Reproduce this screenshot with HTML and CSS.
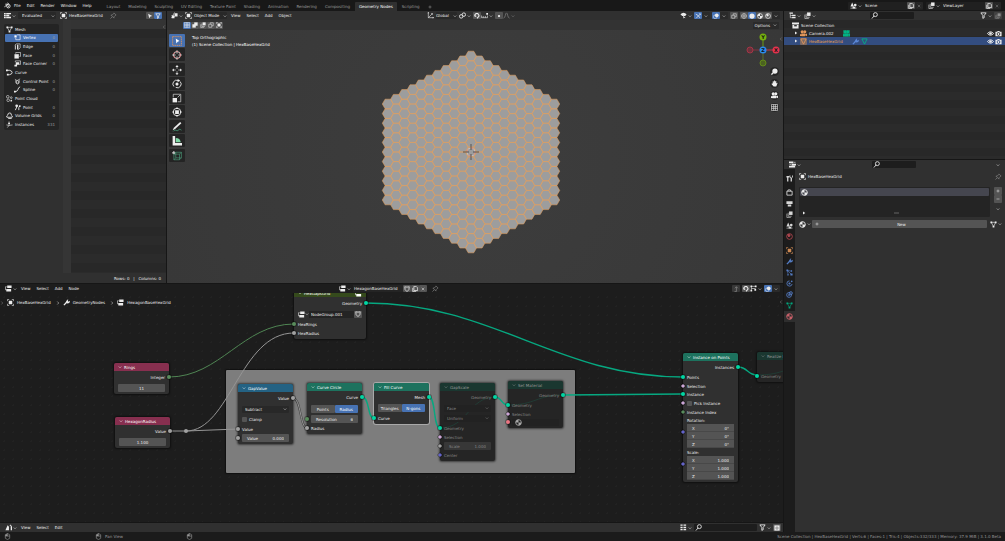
FILE: index.html
```html
<!DOCTYPE html>
<html lang="en">
<head>
<meta charset="utf-8">
<title>Blender</title>
<link rel="stylesheet" href="styles.css">
</head>
<body>
<svg class="sprite" aria-hidden="true">
  <symbol id="chev" viewBox="0 0 16 16"><path class="s" d="M3 6l5 5 5-5"/></symbol>
  <symbol id="left" viewBox="0 0 16 16"><path class="s" d="M11 2L5 8l6 6"/></symbol>
  <symbol id="right" viewBox="0 0 16 16"><path class="s" d="M5 2l6 6-6 6"/></symbol>
  <symbol id="play" viewBox="0 0 16 16"><path class="f" d="M4 2l9 6-9 6z"/></symbol>
  <symbol id="plus" viewBox="0 0 16 16"><path class="s" d="M8 2v12M2 8h12"/></symbol>
  <symbol id="minus" viewBox="0 0 16 16"><path class="s" d="M2 8h12"/></symbol>
  <symbol id="cross" viewBox="0 0 16 16"><path class="s" d="M3 3l10 10M13 3L3 13"/></symbol>
  <symbol id="blender" viewBox="0 0 16 16"><path class="s" d="M1 11l8-6H3M8 2l4 3.500"/><circle class="s" cx="10" cy="9.500" r="4"/><circle class="f" cx="10" cy="9.500" r="1.500"/></symbol>
  <symbol id="sheet" viewBox="0 0 16 16"><path class="f" d="M0 2h4v3H0zM5 2h11v3H5zM0 6.500h4v3H0zM5 6.500h7v3H5zM0 11h4v3H0zM5 11h11v3H5z"/></symbol>
  <symbol id="object" viewBox="0 0 16 16"><path class="f" d="M4 4h8v8H4z"/><path class="s thin" d="M1 5V1h4M11 1h4v4M15 11v4h-4M5 15H1v-4"/></symbol>
  <symbol id="pin" viewBox="0 0 16 16"><path class="s thin" d="M9 2l5 5-2 1-3 3v3L2 7h3l3-3zM5 11l-4 4"/></symbol>
  <symbol id="arrow" viewBox="0 0 16 16"><path class="f" d="M3 2l11 6-5 1.500L6 14z"/></symbol>
  <symbol id="funnel" viewBox="0 0 16 16"><path class="s" d="M2 2h12L9.500 8v5l-3 1.500V8z"/></symbol>
  <symbol id="mesh" viewBox="0 0 16 16"><path class="s thin" d="M3 3h10L8 13z"/><path class="f" d="M1 1h4v4H1zM11 1h4v4h-4zM6 11h4v4H6z"/></symbol>
  <symbol id="tri" viewBox="0 0 16 16"><path class="s" d="M2 2h12L8 14z"/></symbol>
  <symbol id="vertex" viewBox="0 0 16 16"><path class="s thin" d="M7 2h7v11H4V9"/><path class="f" d="M1 3h5v5H1z"/></symbol>
  <symbol id="edge" viewBox="0 0 16 16"><path class="s thin" d="M5 2h9v9l-4 4M2 5l3-3"/><path class="f" d="M7 4h3v11H7zM2 5h2v10H2z"/></symbol>
  <symbol id="face" viewBox="0 0 16 16"><path class="s thin" d="M4 4V1h11v9h-3"/><path class="f" d="M1 5h10v10H1z"/></symbol>
  <symbol id="corner" viewBox="0 0 16 16"><path class="s thin" d="M3 5V2h12v8h-3"/><path class="f" d="M4 5h8v6H4zM1 11h6v4H1z"/></symbol>
  <symbol id="curve" viewBox="0 0 16 16"><path class="s" d="M2 3h6q6 1 6 5t-6 5H5"/><path class="f" d="M0 1h4v4H0zM2 11h4v4H2z"/></symbol>
  <symbol id="cpoint" viewBox="0 0 16 16"><path class="s thin" d="M2 3l5 3 7-4M4 5q-1 9 4 9t4-9"/><circle class="s thin" cx="8" cy="9" r="3"/></symbol>
  <symbol id="spline" viewBox="0 0 16 16"><path class="s" d="M2 13q6 0 7-5t5-6"/><path class="f" d="M0 11h4v4H0z"/></symbol>
  <symbol id="cloud" viewBox="0 0 16 16"><circle class="s thin" cx="4" cy="4" r="3"/><circle class="s thin" cx="12" cy="6" r="2"/><circle class="s thin" cx="5" cy="12" r="3"/><circle class="f" cx="12" cy="13" r="2"/></symbol>
  <symbol id="point" viewBox="0 0 16 16"><path class="s" d="M3 14L8 3M11 14V8l3-4"/><circle class="f" cx="6" cy="4" r="3"/><circle class="f" cx="13" cy="5" r="2"/></symbol>
  <symbol id="volume" viewBox="0 0 16 16"><path class="s" d="M2 12q-2-3 2-5 0-5 5-5 4 1 3 5 4 2 2 5zM5 15h8"/></symbol>
  <symbol id="inst" viewBox="0 0 16 16"><path class="s thin" d="M7 1v9M1 9l6 1 8-1M7 10l-4 5"/><path class="f" d="M5 4h4v3H5z"/></symbol>
  <symbol id="view3d" viewBox="0 0 16 16"><path class="f" d="M8 3h7v7H8zM2 9h6v5H2z"/><path class="s thin" d="M1 14L8 1M1 8h6"/></symbol>
  <symbol id="sel" viewBox="0 0 16 16"><path class="f" d="M6 1h9v9H6z"/><path class="f" d="M1 6h9v9H1z"/></symbol>
  <symbol id="cursor" viewBox="0 0 16 16"><circle class="s thin" cx="8" cy="8" r="5.500"/><circle class="s thin dash" cx="8" cy="8" r="5.500"/><path class="s hair" d="M8 0v6M8 10v6M0 8h6M10 8h6"/></symbol>
  <symbol id="box" viewBox="0 0 16 16"><path class="s thin dots" d="M1 1h14v14H1z"/><path fill="#fff" d="M6 4l6 4-3 1-2 3z"/></symbol>
  <symbol id="move" viewBox="0 0 16 16"><path class="s hair" d="M8 2v4M8 10v4M2 8h4M10 8h4"/><path class="f" d="M8 0l2.500 3h-5zM8 16l2.500-3h-5zM0 8l3-2.500v5zM16 8l-3-2.500v5z"/></symbol>
  <symbol id="rotate" viewBox="0 0 16 16"><path class="s thin" d="M3 12A6 6 0 0 1 10 2.500M13 4a6 6 0 0 1-7 9.500"/><path class="f" d="M8 5l3 3-3 3-3-3zM9 0l4 2.500L9 5z"/></symbol>
  <symbol id="scale" viewBox="0 0 16 16"><path class="s hair" d="M2 7V2h12v12H9M9 7l4-4"/><path class="f" d="M1 8h7v7H1z"/></symbol>
  <symbol id="transform" viewBox="0 0 16 16"><circle class="s thin" cx="8" cy="8" r="6"/><path class="f" d="M5 5h6v6H5zM8 0l2 3H6zM8 16l2-3H6zM0 8l3-2v4zM16 8l-3-2v4z"/></symbol>
  <symbol id="annotate" viewBox="0 0 16 16"><path class="f" d="M13 0l2 2L5 11l-4 2 2-4z"/><path class="s thin green" d="M2 15c4-5 5 1 8-2s4 0 5 0"/></symbol>
  <symbol id="measure" viewBox="0 0 16 16"><path class="f" d="M1 0h4v11h11v4H1z"/><path class="mint" d="M6 3q7 0 8 7H6z"/></symbol>
  <symbol id="cube" viewBox="0 0 16 16"><path class="s hair green" d="M3 5h9v9H3zM3 5l3-3h9v9l-3 3M12 5l3-3M6 2v9h9M6 11l-3 3"/><path class="s thin" d="M3 0v5M0 3h5"/></symbol>
  <symbol id="axes" viewBox="0 0 16 16"><path class="s thin" d="M3 1v12h12M3 13L12 4"/><path class="f" d="M1 3l2-3 2 3zM13 11l3 2-3 2zM9 3h4v4z"/></symbol>
  <symbol id="pivot" viewBox="0 0 16 16"><circle class="s" cx="5" cy="10" r="4"/><circle class="s" cx="11" cy="6" r="4"/></symbol>
  <symbol id="magnet" viewBox="0 0 16 16"><path class="s fat" d="M3 9a5 5 0 0 1 9-5q3 4-1 7l-3 3M3 9l3-1"/></symbol>
  <symbol id="inc" viewBox="0 0 16 16"><path class="s thin" d="M1 8v5h14V8M5 9v4M10 9v4"/><path class="f" d="M12 2h4v4h-4z"/></symbol>
  <symbol id="dot" viewBox="0 0 16 16"><circle class="f" cx="8" cy="8" r="3"/></symbol>
  <symbol id="fall" viewBox="0 0 16 16"><path class="s thin" d="M1 14C6 14 5 2 8 2s2 12 7 12"/></symbol>
  <symbol id="eye" viewBox="0 0 16 16"><path class="s" d="M1 8q7-8 14 0-7 8-14 0z"/><circle class="f" cx="8" cy="8" r="3"/></symbol>
  <symbol id="visib" viewBox="0 0 16 16"><path class="f" d="M1 5q7-7 14 0l-3 4H5zM7 8l1 7 2-2 3 1z"/></symbol>
  <symbol id="giz" viewBox="0 0 16 16"><path class="s" d="M2 3q7 2 11 10M3 14L14 3"/><path class="f" d="M10 1h5v5z"/></symbol>
  <symbol id="over" viewBox="0 0 16 16"><circle class="f" cx="10" cy="6" r="5"/><circle class="s thin" cx="6" cy="10" r="5"/></symbol>
  <symbol id="xray" viewBox="0 0 16 16"><path class="s thin" d="M2 6h8v8H2zM6 6V2h8v8h-4"/></symbol>
  <symbol id="globe" viewBox="0 0 16 16"><circle class="s thin" cx="8" cy="8" r="6.500"/><path class="s thin" d="M8 1v14M1 8h14"/></symbol>
  <symbol id="disc" viewBox="0 0 16 16"><circle class="f" cx="8" cy="8" r="7"/></symbol>
  <symbol id="mat" viewBox="0 0 16 16"><circle class="s" cx="8" cy="8" r="6.500"/><path class="f" d="M8 8V1Q2 2 1 8zM8 8h7q-1 6-7 7z"/></symbol>
  <symbol id="rend" viewBox="0 0 16 16"><circle class="s" cx="8" cy="8" r="6.500"/><path class="f" d="M3 3q6-2 7 2T5 9z"/></symbol>
  <symbol id="zoom" viewBox="0 0 16 16"><circle class="f" cx="9" cy="7" r="6"/><path class="s fat" d="M5 11l-4 4"/></symbol>
  <symbol id="hand" viewBox="0 0 16 16"><path class="f" d="M4 8V3h2v4l1-6h2v6l1-5h2v6l2-2 1 1-3 8H6L1 9l1-1z"/></symbol>
  <symbol id="movie" viewBox="0 0 16 16"><circle class="f" cx="5" cy="4" r="3.500"/><circle class="f" cx="11" cy="4" r="3.500"/><path class="f" d="M3 8h9v6H3zM12 10l4-2v6l-4-2zM0 9l3 1v3l-3 1z"/></symbol>
  <symbol id="grid" viewBox="0 0 16 16"><path class="s thin" d="M1 1h14v14H1zM1 6h14M1 10h14M6 1v14M10 1v14"/></symbol>
  <symbol id="photo" viewBox="0 0 16 16"><path fill="currentColor" fill-rule="evenodd" d="M1 4h4l1-2h4l1 2h4v10H1zM8 5a4 4 0 1 0 .1 0zM8 7a2 2 0 1 1-.1 0z"/></symbol>
  <symbol id="scene" viewBox="0 0 16 16"><path class="f" d="M5 1l4 9H1zM6 11h6v4H6z"/><circle class="f" cx="12" cy="7" r="3"/><path class="s thin" d="M1 14h14"/></symbol>
  <symbol id="layers" viewBox="0 0 16 16"><path class="s thin" d="M2 6v9h9M5 4v8h8"/><path class="f" d="M7 1h8v8H7z"/></symbol>
  <symbol id="copy" viewBox="0 0 16 16"><path class="s" d="M5 1h6l4 4v7H5zM2 5v10h9"/></symbol>
  <symbol id="tree" viewBox="0 0 16 16"><path class="f" d="M1 1h8v3H1zM7 6h8v3H7zM7 11h8v3H7z"/><path class="s thin" d="M3 4v9h4M3 8h4"/></symbol>
  <symbol id="search" viewBox="0 0 16 16"><circle class="s" cx="10" cy="6" r="4.500"/><path class="s" d="M7 9l-5 6"/></symbol>
  <symbol id="coll" viewBox="0 0 16 16"><path class="f" d="M0 1h16v4H0zM1 6h14v9H1z"/><path d="M5 7h6v3H5z" fill="#282828"/></symbol>
  <symbol id="wrench" viewBox="0 0 16 16"><path class="s fat" d="M2 14l7-7"/><path class="f" d="M8 4l4-4-1 4 2 2 3-2q0 6-6 6L6 8z"/></symbol>
  <symbol id="props" viewBox="0 0 16 16"><path class="f" d="M0 1h10v4H0zM6 6h10v4H6zM0 11h14v4H0z"/><path class="s thin" d="M11 3h4M1 8h4"/></symbol>
  <symbol id="tool" viewBox="0 0 16 16"><path class="s fat" d="M4 5v10M12 7v8M1 4h7"/><path class="s" d="M9 1v4l3 2 3-2V1"/></symbol>
  <symbol id="tv" viewBox="0 0 16 16"><path class="s" d="M2 5h12v9H2zM4 5l1-3h5l1 3"/></symbol>
  <symbol id="print" viewBox="0 0 16 16"><path class="f" d="M1 3h14v6H1zM4 10h8v5H4z"/></symbol>
  <symbol id="part" viewBox="0 0 16 16"><path class="s thin" d="M3 3l9 9M3 3l9 2M3 3l2 10"/><path class="f" d="M1 1h4v4H1zM11 3h3v3h-3zM10 10h5v5h-5zM3 12h3v3H3z"/></symbol>
  <symbol id="phys" viewBox="0 0 16 16"><path class="s" d="M14 9A6 6 0 1 1 8 2"/><circle class="f" cx="8" cy="8" r="2.500"/><circle class="f" cx="13" cy="3" r="2"/></symbol>
  <symbol id="cons" viewBox="0 0 16 16"><circle class="s" cx="7" cy="9" r="5.500"/><circle class="s" cx="11" cy="5" r="3.500"/><circle class="f" cx="7" cy="9" r="2"/></symbol>
  <symbol id="nodes" viewBox="0 0 16 16"><path class="f" d="M5 1h10v6H5zM3 9h11v6H3z"/><path class="s thin" d="M4 4H1v7h3"/></symbol>
  <symbol id="shield" viewBox="0 0 16 16"><path class="s" d="M2 2q6 2 12 0 1 9-6 13Q1 11 2 2z"/></symbol>
  <symbol id="up" viewBox="0 0 16 16"><path class="s" d="M4 15h5V2M5 6l4-4 4 4"/></symbol>
  <symbol id="snap" viewBox="0 0 16 16"><path class="s thin" d="M3 3h10M3 3v10M3 8h10"/><path class="f" d="M1 1h4v4H1zM1 11h4v4H1zM11 1h4v4h-4zM10 9h4v4h-4z"/></symbol>
  <symbol id="anim" viewBox="0 0 16 16"><path class="f" d="M1 14L6 3l3 3v8zM10 4h3v10h3V6l-3-5z"/></symbol>
  <symbol id="blocks" viewBox="0 0 16 16"><path class="f" d="M1 1h5v3H1zM8 1h6v3H8zM1 6h5v3H1zM8 6h6v3H8zM1 11h5v3H1zM8 11h6v3H8z"/></symbol>
  <symbol id="gear" viewBox="0 0 16 16"><path class="f" d="M1 1h14v14H1z"/><circle cx="8" cy="8" r="4" fill="#777"/><circle cx="8" cy="8" r="2" fill="#eee"/></symbol>
  <symbol id="mouse" viewBox="0 0 16 16"><path class="s thin" d="M3 4q5-6 10 0v8q-5 6-10 0zM8 1v6M3 7h10"/><path class="f" d="M3 4l4-2v5H3z"/></symbol>
</svg>

<header class="topbar">
  <svg class="ic logo"><use href="#blender"/></svg>
  <nav class="menus"><button>File</button><button>Edit</button><button>Render</button><button>Window</button><button>Help</button></nav>
  <nav class="tabs">
    <button>Layout</button><button>Modeling</button><button>Sculpting</button><button>UV Editing</button><button>Texture Paint</button><button>Shading</button><button>Animation</button><button>Rendering</button><button>Compositing</button><button class="on">Geometry Nodes</button><button>Scripting</button><button class="addtab" aria-label="Add workspace"><svg class="ic xs"><use href="#plus"/></svg></button>
  </nav>
  <div class="ids">
    <div class="idbox"><span class="ib"><svg class="ic"><use href="#scene"/></svg><svg class="ic xs"><use href="#chev"/></svg></span><input aria-label="Scene" value="Scene"><button aria-label="New scene" class="sq"><svg class="ic"><use href="#copy"/></svg></button><button aria-label="Delete scene" class="sq off"><svg class="ic xs"><use href="#cross"/></svg></button></div>
    <div class="idbox"><span class="ib"><svg class="ic"><use href="#layers"/></svg><svg class="ic xs"><use href="#chev"/></svg></span><input aria-label="View layer" value="ViewLayer"><button aria-label="New view layer" class="sq"><svg class="ic"><use href="#copy"/></svg></button><button aria-label="Delete view layer" class="sq off"><svg class="ic xs"><use href="#cross"/></svg></button></div>
  </div>
</header>

<main class="work">
  <div class="leftcol">
    <div class="upper">
      <section class="sheet">
        <div class="bar">
          <button class="drop" aria-label="Editor type"><svg class="ic"><use href="#sheet"/></svg><svg class="ic xs"><use href="#chev"/></svg></button>
          <span class="pick w38"><select aria-label="Object state"><option>Evaluated</option></select><svg class="ic xs"><use href="#chev"/></svg></span>
          <svg class="ic"><use href="#object"/></svg><span>HexBaseHexGrid</span><svg class="ic dim pinned"><use href="#pin"/></svg>
          <span class="push join"><button class="sq" aria-label="Only selected"><svg class="ic"><use href="#arrow"/></svg></button><button class="sq blue" aria-label="Filter"><svg class="ic"><use href="#funnel"/></svg></button></span>
        </div>
        <div class="sheetbody">
          <ul class="domains">
            <li><svg class="ic"><use href="#mesh"/></svg>Mesh</li>
            <li class="in on"><svg class="ic"><use href="#vertex"/></svg>Vertex<b>0</b></li>
            <li class="in"><svg class="ic"><use href="#edge"/></svg>Edge<b>0</b></li>
            <li class="in"><svg class="ic"><use href="#face"/></svg>Face<b>0</b></li>
            <li class="in"><svg class="ic"><use href="#corner"/></svg>Face Corner<b>0</b></li>
            <li><svg class="ic"><use href="#curve"/></svg>Curve</li>
            <li class="in"><svg class="ic"><use href="#cpoint"/></svg>Control Point<b>0</b></li>
            <li class="in"><svg class="ic"><use href="#spline"/></svg>Spline<b>0</b></li>
            <li><svg class="ic"><use href="#cloud"/></svg>Point Cloud</li>
            <li class="in"><svg class="ic"><use href="#point"/></svg>Point<b>0</b></li>
            <li><svg class="ic"><use href="#volume"/></svg>Volume Grids<b>0</b></li>
            <li><svg class="ic"><use href="#inst"/></svg>Instances<b>331</b></li>
          </ul>
          <div class="cells"><div class="cellhead"><svg class="ic xs dim"><use href="#left"/></svg></div><div class="cellrows"></div></div>
        </div>
        <footer class="counts">Rows: 0 &nbsp; | &nbsp; Columns: 0</footer>
      </section>

      <section class="viewport">
        <div class="bar">
          <button class="drop" aria-label="Editor type"><svg class="ic"><use href="#view3d"/></svg><svg class="ic xs"><use href="#chev"/></svg></button>
          <svg class="ic"><use href="#object"/></svg>
          <span class="pick w33"><select aria-label="Mode"><option>Object Mode</option></select><svg class="ic xs"><use href="#chev"/></svg></span>
          <nav class="menus"><button>View</button><button>Select</button><button>Add</button><button>Object</button></nav>
          <div class="mid">
            <svg class="ic"><use href="#axes"/></svg><span class="pick w22"><select aria-label="Orientation"><option>Global</option></select><svg class="ic xs"><use href="#chev"/></svg></span>
            <button class="drop" aria-label="Pivot"><svg class="ic"><use href="#pivot"/></svg><svg class="ic xs"><use href="#chev"/></svg></button>
            <span class="join"><button class="sq" aria-label="Snap"><svg class="ic"><use href="#magnet"/></svg></button><button class="drop" aria-label="Snap to"><svg class="ic"><use href="#inc"/></svg><svg class="ic xs"><use href="#chev"/></svg></button></span>
            <span class="join"><button class="sq" aria-label="Proportional editing"><svg class="ic"><use href="#dot"/></svg></button><button class="drop off" aria-label="Falloff"><svg class="ic"><use href="#fall"/></svg><svg class="ic xs"><use href="#chev"/></svg></button></span>
          </div>
          <div class="push views">
            <button class="drop" aria-label="Visibility"><svg class="ic"><use href="#visib"/></svg><svg class="ic xs"><use href="#chev"/></svg></button>
            <span class="join"><button class="sq blue" aria-label="Gizmos"><svg class="ic"><use href="#giz"/></svg></button><button class="sq flat" aria-label="Gizmo options"><svg class="ic xs"><use href="#chev"/></svg></button></span>
            <span class="join"><button class="sq blue" aria-label="Overlays"><svg class="ic"><use href="#over"/></svg></button><button class="sq flat" aria-label="Overlay options"><svg class="ic xs"><use href="#chev"/></svg></button></span>
            <button class="sq" aria-label="X-ray"><svg class="ic"><use href="#xray"/></svg></button>
            <span class="join"><button class="sq" aria-label="Wireframe"><svg class="ic"><use href="#globe"/></svg></button><button class="sq blue" aria-label="Solid"><svg class="ic"><use href="#disc"/></svg></button><button class="sq" aria-label="Material preview"><svg class="ic"><use href="#mat"/></svg></button><button class="sq" aria-label="Rendered"><svg class="ic"><use href="#rend"/></svg></button><button class="sq flat" aria-label="Shading options"><svg class="ic xs"><use href="#chev"/></svg></button></span>
          </div>
        </div>
        <div class="toolset">
          <span class="join"><button class="sq blue" aria-label="Set"><svg class="ic"><use href="#grid"/></svg></button><button class="sq" aria-label="Extend"><svg class="ic"><use href="#sel"/></svg></button><button class="sq" aria-label="Subtract"><svg class="ic"><use href="#layers"/></svg></button><button class="sq" aria-label="Invert"><svg class="ic"><use href="#xray"/></svg></button><button class="sq" aria-label="Intersect"><svg class="ic"><use href="#object"/></svg></button></span>
          <button class="push options">Options <svg class="ic xs"><use href="#chev"/></svg></button>
        </div>
        <div class="scene">
          <svg class="stage" role="img" aria-label="Hexagon grid">
            <g transform="translate(304 122)">
              <g id="hexes" class="hexes"></g>
              <circle class="c3w" r="4"/><circle class="c3r" r="4"/>
              <path class="c3x" d="M-8 0h6M2 0h6M0-8v6M0 2v6"/>
            </g>
          </svg>
          <div class="tools">
            <div><button class="blue" aria-label="Select box"><svg class="ic lg orange"><use href="#box"/></svg></button><button aria-label="Cursor"><svg class="ic lg"><use href="#cursor"/></svg></button></div>
            <div><button aria-label="Move"><svg class="ic lg"><use href="#move"/></svg></button><button aria-label="Rotate"><svg class="ic lg"><use href="#rotate"/></svg></button><button aria-label="Scale"><svg class="ic lg"><use href="#scale"/></svg></button><button aria-label="Transform"><svg class="ic lg"><use href="#transform"/></svg></button></div>
            <div><button aria-label="Annotate"><svg class="ic lg"><use href="#annotate"/></svg></button><button aria-label="Measure"><svg class="ic lg"><use href="#measure"/></svg></button></div>
            <div><button aria-label="Add cube"><svg class="ic lg"><use href="#cube"/></svg></button></div>
          </div>
          <p class="viewname">Top Orthographic<br>(1) Scene Collection | HexBaseHexGrid</p>
          <div class="navi">
            <svg class="orbit" viewBox="0 0 34 34" role="img" aria-label="Axes">
              <path d="M17 4v13" stroke="#6b9c13"/><path d="M17 17v12" stroke="#59702a"/><path d="M17 17h12" stroke="#c7344a"/><path d="M5 17h12" stroke="#83313f"/>
              <circle cx="4" cy="17" r="3" fill="#6b323b" stroke="#a33547"/><circle cx="17" cy="30" r="3" fill="#4c6320" stroke="#628a19"/>
              <circle cx="17" cy="4" r="3.500" fill="#76b00f"/><circle cx="30" cy="17" r="3.500" fill="#e5334e"/><circle cx="17" cy="17" r="3.500" fill="#2b8bee"/>
              <text x="17" y="6">Y</text><text x="30" y="19">X</text><text x="17" y="19">Z</text>
            </svg>
            <button aria-label="Zoom"><svg class="ic"><use href="#zoom"/></svg></button><button aria-label="Pan"><svg class="ic"><use href="#hand"/></svg></button><button aria-label="Camera view"><svg class="ic"><use href="#movie"/></svg></button><button aria-label="Perspective"><svg class="ic"><use href="#grid"/></svg></button>
          </div>
          <svg class="ic xs dim side"><use href="#left"/></svg>
        </div>
      </section>
    </div>

    <section class="nodeed">
      <div class="bar dark">
        <button class="drop" aria-label="Editor type"><svg class="ic"><use href="#nodes"/></svg><svg class="ic xs"><use href="#chev"/></svg></button>
        <nav class="menus"><button>View</button><button>Select</button><button>Add</button><button>Node</button></nav>
        <div class="tree">
          <button class="drop" aria-label="Browse node tree"><svg class="ic"><use href="#nodes"/></svg><svg class="ic xs"><use href="#chev"/></svg></button><input aria-label="Node tree" value="HexagonBaseHexGrid"><span class="join"><button class="sq" aria-label="Fake user"><svg class="ic"><use href="#shield"/></svg></button><button class="sq" aria-label="Duplicate"><svg class="ic"><use href="#copy"/></svg></button><button class="sq" aria-label="Unlink"><svg class="ic xs"><use href="#cross"/></svg></button></span><svg class="ic dim pinned"><use href="#pin"/></svg>
        </div>
        <div class="push views">
          <button class="sq off" aria-label="Parent tree"><svg class="ic"><use href="#up"/></svg></button>
          <span class="join"><button class="sq" aria-label="Snap nodes"><svg class="ic"><use href="#magnet"/></svg></button><button class="drop" aria-label="Snap target"><svg class="ic"><use href="#snap"/></svg><svg class="ic xs"><use href="#chev"/></svg></button></span>
          <span class="join"><button class="sq blue" aria-label="Overlays"><svg class="ic"><use href="#over"/></svg></button><button class="sq flat" aria-label="Overlay options"><svg class="ic xs"><use href="#chev"/></svg></button></span>
        </div>
      </div>
      <div class="canvas">
        <div class="frame"></div>
        <svg class="links" aria-hidden="true"><g transform="translate(0 -293)">
          <path class="int" d="M169 377C220 377 243 324 294 324"/>
          <path class="val" d="M170 431H186L238 429M186 431C230 431 240 333 294 333"/>
          <path class="dk" d="M293 398C301 398 300 428 307 428"/><path class="val" d="M293 398C301 398 300 428 307 428"/>
          <path class="geo" d="M366 303C493 303 557 377 683 377M563 395L683 394M738 367C748 367 747 375 757 375M362 397C370 397 367 418 374 418M429 397C436 397 433 428 440 428M495 397C502 397 501 405 508 405"/>
          <circle cx="186" cy="431" r="2" fill="#a1a1a1"/>
        </g></svg>
        <nav class="crumbs"><svg class="ic xs dim"><use href="#right"/></svg><svg class="ic"><use href="#object"/></svg>HexBaseHexGrid<svg class="ic xs"><use href="#right"/></svg><svg class="ic"><use href="#wrench"/></svg>GeometryNodes<svg class="ic xs"><use href="#right"/></svg><svg class="ic"><use href="#nodes"/></svg>HexagonBaseHexGrid</nav>
        <svg class="ic xs dim side"><use href="#left"/></svg>

        <article class="node n-group"><h3 class="olive"><svg class="ic xs"><use href="#chev"/></svg>HexGapsGrid<svg class="ic push"><use href="#nodes"/></svg></h3>
          <div class="row out c-geo">Geometry</div>
          <div class="row g3 grp"><svg class="ic"><use href="#nodes"/></svg><svg class="ic xs"><use href="#chev"/></svg><input aria-label="Node group" value="NodeGroup.001"><button class="sq" aria-label="Fake user"><svg class="ic"><use href="#shield"/></svg></button></div>
          <div class="row g2 c-int in">HexRings</div><div class="row g1 c-val in">HexRadius</div></article>

        <article class="node n-rings"><h3 class="red"><svg class="ic xs"><use href="#chev"/></svg>Rings</h3>
          <div class="row g2 out c-int">Integer</div><div class="row g3"><input class="field mid-text" aria-label="Rings" value="11"></div></article>
        <article class="node n-radius"><h3 class="red"><svg class="ic xs"><use href="#chev"/></svg>HexagonRadius</h3>
          <div class="row g2 out c-val">Value</div><div class="row g3"><input class="field mid-text" aria-label="Hexagon radius" value="1.100"></div></article>

        <article class="node n-gap"><h3 class="cyan"><svg class="ic xs"><use href="#chev"/></svg>GapValue</h3>
          <div class="row out c-val">Value</div>
          <div class="row g3"><span class="pick wide"><select aria-label="Operation"><option>Subtract</option></select><svg class="ic xs"><use href="#chev"/></svg></span></div>
          <div class="row g2"><label class="tick"><input type="checkbox">Clamp</label></div>
          <div class="row g2 c-val in">Value</div>
          <div class="row g1 c-val in"><label class="field"><span>Value</span><input value="0.000"></label></div></article>

        <article class="node n-circle"><h3 class="teal"><svg class="ic xs"><use href="#chev"/></svg>Curve Circle</h3>
          <div class="row out c-geo">Curve</div>
          <div class="row g4"><span class="switch"><button>Points</button><button class="on">Radius</button></span></div>
          <div class="row g2 c-int in"><label class="field"><span>Resolution</span><input value="6"></label></div>
          <div class="row g1 c-val in">Radius</div></article>

        <article class="node n-fill picked"><h3 class="teal"><svg class="ic xs"><use href="#chev"/></svg>Fill Curve</h3>
          <div class="row out c-geo">Mesh</div>
          <div class="row g3"><span class="switch"><button>Triangles</button><button class="on">N-gons</button></span></div>
          <div class="row g2 c-geo in">Curve</div></article>

        <article class="node n-scale muted"><h3 class="teal"><svg class="ic xs"><use href="#chev"/></svg>GapScale</h3>
          <svg class="inner" aria-hidden="true"><path d="M0 45C28 45 28 14 56 14"/></svg>
          <div class="row out c-geo">Geometry</div>
          <div class="row g3"><span class="pick wide"><select aria-label="Domain"><option>Face</option></select><svg class="ic xs"><use href="#chev"/></svg></span></div>
          <div class="row g2"><span class="pick wide"><select aria-label="Scale mode"><option>Uniform</option></select><svg class="ic xs"><use href="#chev"/></svg></span></div>
          <div class="row g2 c-geo in">Geometry</div><div class="row g1 c-bool in dia">Selection</div>
          <div class="row g1 c-val in dia"><label class="field"><span>Scale</span><input value="1.000"></label></div>
          <div class="row g1 c-vec in dia">Center</div></article>

        <article class="node n-mat muted"><h3 class="teal"><svg class="ic xs"><use href="#chev"/></svg>Set Material</h3>
          <svg class="inner" aria-hidden="true"><path d="M0 24C28 24 28 14 56 14"/></svg>
          <div class="row out c-geo">Geometry</div><div class="row g2 c-geo in">Geometry</div><div class="row g1 c-bool in dia">Selection</div>
          <div class="row c-mat in"><span class="pick wide slot"><svg class="ic"><use href="#mat"/></svg></span></div></article>

        <article class="node n-inst"><h3 class="teal"><svg class="ic xs"><use href="#chev"/></svg>Instance on Points</h3>
          <div class="row out c-geo">Instances</div>
          <div class="row g2 c-geo in">Points</div><div class="row g1 c-bool in dia">Selection</div><div class="row c-geo in">Instance</div>
          <div class="row g1 c-bool in dia"><label class="tick"><input type="checkbox">Pick Instance</label></div>
          <div class="row g1 c-int in dia">Instance Index</div>
          <div class="row">Rotation:</div>
          <div class="trio c-vec in dia"><label class="field"><span>X</span><input value="0°"></label><label class="field"><span>Y</span><input value="0°"></label><label class="field"><span>Z</span><input value="0°"></label></div>
          <div class="row">Scale:</div>
          <div class="trio c-vec in dia"><label class="field"><span>X</span><input value="1.000"></label><label class="field"><span>Y</span><input value="1.000"></label><label class="field"><span>Z</span><input value="1.000"></label></div></article>

        <article class="node n-real muted"><h3 class="teal"><svg class="ic xs"><use href="#chev"/></svg>Realize Instances</h3>
          <svg class="inner" aria-hidden="true"><path d="M0 23C28 23 28 14 56 14"/></svg>
          <div class="row"></div><div class="row g2 c-geo in">Geometry</div></article>
      </div>
    </section>

    <section class="bar foot">
      <button class="drop" aria-label="Editor type"><svg class="ic"><use href="#anim"/></svg><svg class="ic xs"><use href="#chev"/></svg></button>
      <nav class="menus"><button>View</button><button>Select</button><button>Edit</button></nav>
      <div class="push views"><button class="drop" aria-label="Display mode"><svg class="ic"><use href="#blocks"/></svg><svg class="ic xs"><use href="#chev"/></svg></button><label class="find w64"><svg class="ic"><use href="#search"/></svg><input aria-label="Filter files"></label><button class="drop" aria-label="Filter"><svg class="ic"><use href="#funnel"/></svg><svg class="ic xs"><use href="#chev"/></svg></button><button class="sq" aria-label="Settings"><svg class="ic"><use href="#gear"/></svg></button></div>
    </section>
  </div>

  <aside class="rightcol">
    <section class="outliner">
      <div class="bar">
        <button class="drop" aria-label="Editor type"><svg class="ic"><use href="#tree"/></svg><svg class="ic xs"><use href="#chev"/></svg></button>
        <button class="drop" aria-label="Display mode"><svg class="ic"><use href="#layers"/></svg><svg class="ic xs"><use href="#chev"/></svg></button>
        <label class="find w44"><svg class="ic"><use href="#search"/></svg><input aria-label="Search outliner"></label>
        <span class="views push"><button class="drop" aria-label="Filter"><svg class="ic"><use href="#funnel"/></svg><svg class="ic xs"><use href="#chev"/></svg></button><button class="sq off" aria-label="New collection"><svg class="ic"><use href="#layers"/></svg></button></span>
      </div>
      <ul class="items">
        <li class="root"><svg class="ic"><use href="#coll"/></svg>Scene Collection</li>
        <li><svg class="ic xs"><use href="#play"/></svg><svg class="ic orange"><use href="#movie"/></svg>Camera.002<svg class="ic data chip"><use href="#movie"/></svg><span class="push eyes"><svg class="ic"><use href="#eye"/></svg><svg class="ic"><use href="#photo"/></svg></span></li>
        <li class="on"><svg class="ic xs"><use href="#play"/></svg><svg class="ic orange glow"><use href="#tri"/></svg><em>HexBaseHexGrid</em><svg class="ic mod"><use href="#wrench"/></svg><svg class="ic data"><use href="#tri"/></svg><span class="push eyes"><svg class="ic"><use href="#eye"/></svg><svg class="ic"><use href="#photo"/></svg></span></li>
      </ul>
    </section>
    <section class="properties">
      <div class="bar">
        <button class="drop" aria-label="Editor type"><svg class="ic"><use href="#props"/></svg><svg class="ic xs"><use href="#chev"/></svg></button>
        <label class="find w44 pf"><svg class="ic"><use href="#search"/></svg><input aria-label="Search properties"></label>
        <span class="push opt"><svg class="ic xs"><use href="#chev"/></svg></span>
      </div>
      <div class="propbody">
        <nav class="ptabs">
          <button aria-label="Tool"><svg class="ic"><use href="#tool"/></svg></button>
          <button class="sep" aria-label="Render"><svg class="ic"><use href="#tv"/></svg></button><button aria-label="Output"><svg class="ic"><use href="#print"/></svg></button><button aria-label="View layer"><svg class="ic"><use href="#layers"/></svg></button><button aria-label="Scene"><svg class="ic"><use href="#scene"/></svg></button><button class="world" aria-label="World"><svg class="ic"><use href="#rend"/></svg></button>
          <button class="sep orange" aria-label="Object"><svg class="ic"><use href="#object"/></svg></button><button class="mod" aria-label="Modifiers"><svg class="ic"><use href="#wrench"/></svg></button><button class="mod" aria-label="Particles"><svg class="ic"><use href="#part"/></svg></button><button class="mod" aria-label="Physics"><svg class="ic"><use href="#phys"/></svg></button><button class="mod" aria-label="Constraints"><svg class="ic"><use href="#cons"/></svg></button><button class="data" aria-label="Data"><svg class="ic"><use href="#mesh"/></svg></button><button class="matc on" aria-label="Material"><svg class="ic"><use href="#mat"/></svg></button>
        </nav>
        <div class="panel">
          <div class="path"><svg class="ic"><use href="#object"/></svg>HexBaseHexGrid<svg class="ic dim push"><use href="#pin"/></svg></div>
          <div class="slots">
            <div class="list"><div class="slotrow"><svg class="ic"><use href="#mat"/></svg></div><div class="listfoot"><svg class="ic xs"><use href="#play"/></svg><i></i></div></div>
            <div class="edit"><button class="sq" aria-label="Add slot"><svg class="ic xs"><use href="#plus"/></svg></button><button class="sq" aria-label="Remove slot"><svg class="ic xs"><use href="#minus"/></svg></button><svg class="ic xs down"><use href="#chev"/></svg></div>
          </div>
          <div class="newrow"><button class="drop" aria-label="Browse material"><svg class="ic"><use href="#mat"/></svg><svg class="ic xs"><use href="#chev"/></svg></button><button class="new"><svg class="ic xs"><use href="#plus"/></svg><span>New</span></button><button class="drop" aria-label="Slot link"><svg class="ic"><use href="#mesh"/></svg><svg class="ic xs"><use href="#chev"/></svg></button></div>
        </div>
      </div>
    </section>
  </aside>
</main>

<footer class="status"><span class="m1"><svg class="ic"><use href="#mouse"/></svg></span><span class="m2"><svg class="ic"><use href="#mouse"/></svg>Pan View</span><span class="m3"><svg class="ic"><use href="#mouse"/></svg></span><span class="push">Scene Collection | HexBaseHexGrid | Verts:6 | Faces:1 | Tris:4 | Objects:332/333 | Memory: 37.9 MiB | 3.1.0 Beta</span></footer>
<script src="hexgrid.js"></script>
</body>
</html>
```
FILE: styles.css
```css
* { box-sizing: border-box; }
html, body { margin: 0; height: 100%; }
body {
  display: grid; grid-template-rows: 11px minmax(0, 1fr) 9px;
  background: #161616; color: #ececec; overflow: hidden;
  font: 4px/5px "DejaVu Sans", sans-serif; text-rendering: geometricPrecision;
}
button, input, select { font: inherit; color: inherit; border: 0; padding: 0; margin: 0; background: none; min-width: 0; outline: 0; }
select { appearance: none; }
h3, p, ul { margin: 0; padding: 0; font-size: 4px; font-weight: normal; list-style: none; }
.sprite { position: absolute; width: 0; height: 0; }
.s { fill: none; stroke: currentColor; stroke-width: 2; }
.thin { stroke-width: 1.4; }
.hair { stroke-width: 1; }
.fat { stroke-width: 3; }
.f { fill: currentColor; }
.dash { stroke: #e0484d; stroke-dasharray: 3 3; }
.dots { stroke-dasharray: 2 1; }
.green { stroke: #4c9f7c; }
.mint { fill: #7fd8a5; }
.ic { width: 7px; height: 7px; padding: 0; flex: none; display: block; }
.xs { width: 4px; height: 4px; }
.lg { width: 10px; height: 10px; }
.dim { color: #8c8c8c; }
.push { margin-left: auto; }
.orange { color: #e0955a; }
.mod { color: #5b87d6; }
.data { color: #00b386; }
.world { color: #c04b55; }
.matc { color: #dc6872; }
.off { opacity: .5; }

.bar, .toolset, .join, .drop, .sq, .pick, .menus, .views, .mid, .tree, .find, .topbar, .tabs, .ids, .idbox, .ib, .crumbs, .row, .status, .tick { display: flex; align-items: center; }
.menus { gap: 6px; }
.drop { gap: 1px; height: 8px; }
.sq { width: 8px; height: 7px; justify-content: center; background: #545454; border-radius: 1px; flex: none; }
.sq .ic:not(.xs) { width: 6px; height: 6px; }
.sq.flat { background: #2a2a2a; }
.blue, .sq.blue { background: #4772b3; }
.join { gap: 0; }
.pick { height: 7px; background: #282828; border-radius: 1px; }
.pick select { flex: 1; width: 100%; height: 7px; }
.w38 { width: 38px; padding: 0 1px 0 4px; }
.w33 { width: 33px; }
.w22 { width: 21px; }
.wide { flex: 1; padding: 0 2px 0 3px; }

.topbar { background: #181818; padding: 0 4px; }
.topbar .menus { margin-left: 3px; }
.tabs { margin-left: 11px; align-self: stretch; align-items: flex-end; color: #9a9a9a; }
.tabs button { height: 9px; padding: 0 4px; border-radius: 1px 1px 0 0; }
.tabs .on { background: #303030; color: #fff; margin: 0 1px; }
.tabs .addtab { display: grid; place-items: center; }
.ids { margin-left: auto; gap: 3px; }
.idbox { width: 75px; height: 8px; background: #202020; border-radius: 1px; }
.ib { gap: 1px; padding: 0 2px; }
.idbox input { flex: 1; width: 0; padding-left: 1px; }
.idbox .sq.off { background: #2c2c2c; }

.work { display: grid; grid-template-columns: minmax(0, 1fr) 221px; gap: 1px; min-height: 0; }
.leftcol { display: grid; grid-template-rows: 272fr 238fr 9px; gap: 1px; min-height: 0; }
.rightcol { display: grid; grid-template-rows: 148fr 372fr; gap: 1px; min-height: 0; }
.upper { display: grid; grid-template-columns: 166px minmax(0, 1fr); gap: 1px; min-height: 0; }
.bar { height: 9px; background: #303030; padding: 0 5px; position: relative; flex: none; }

.sheet, .viewport, .nodeed, .outliner, .properties { display: flex; flex-direction: column; min-height: 0; min-width: 0; overflow: hidden; }
.sheet { background: #303030; }
.sheet .bar { gap: 2px; padding: 0 4px; }
.sheet .w38 { margin-right: 2px; }
.pinned { margin-left: 5px; }
.sheetbody { flex: 1; display: flex; min-height: 0; gap: 4px; padding-left: 4px; }
.domains { width: 55px; height: 106px; margin-top: 4px; padding: 1px; display: grid; grid-auto-rows: 1fr; background: #242424; border-radius: 2px; }
.domains li { display: flex; align-items: center; gap: 2px; padding: 0 3px 0 1px; border-radius: 1px; }
.domains .in { padding-left: 9px; }
.domains .on { background: #4772b3; color: #fff; }
.domains b { margin-left: auto; font-weight: normal; color: #9a9a9a; }
.domains .in::before { display: none; }
.cells { flex: 1; display: flex; flex-direction: column; border-left: 8px solid #353535; }
.cellhead { height: 9px; background: #343434; display: flex; justify-content: flex-end; align-items: flex-end; }
.cellrows { flex: 1; background: repeating-linear-gradient(#282828 0 9px, #2b2b2b 9px 18px); }
.counts { height: 10px; text-align: right; padding: 3px 5px 0 0; }

.viewport { background: #3b3b3b; }
.viewport .bar { background: #303030; gap: 2px; padding: 0 3px 0 4px; }
.viewport .menus { margin-left: 2px; }
.viewport .mid, .views { gap: 2px; }
.mid { position: absolute; left: 260px; }
.toolset { height: 10px; background: #333; padding: 0 4px 0 16px; }
.options { display: flex; align-items: center; gap: 3px; background: #2a2a2a; padding: 1px 2px; border-radius: 1px; }
.scene { flex: 1; position: relative; background: radial-gradient(circle, #3d3d3d, #383838); }
.stage, .links { position: absolute; inset: 0; width: 100%; height: 100%; }
.hexes { fill: #9d9d9d; stroke: #e0a060; stroke-width: .6; }
.c3w, .c3r { fill: none; stroke: #ccc; stroke-width: .7; }
.c3r { stroke: #d66a5e; stroke-dasharray: 3 3; }
.c3x { stroke: #333; stroke-width: .7; }
.tools { position: absolute; left: 2px; top: 4px; display: grid; gap: 2px; color: #eee; }
.tools div { display: grid; gap: 1px; }
.tools button { width: 16px; height: 13px; display: grid; place-items: center; background: #242424; border-radius: 1px; }
.tools .blue { background: #4772b3; }
.viewname { position: absolute; left: 25px; top: 4px; line-height: 7px; color: #fff; }
.navi { position: absolute; right: 3px; top: 3px; display: flex; flex-direction: column; align-items: flex-end; gap: 3px; }
.orbit { width: 34px; height: 34px; margin-bottom: -3px; }
.orbit path { stroke-width: 1; }
.orbit text { font-size: 5px; text-anchor: middle; fill: #111; font-weight: bold; }
.navi button { width: 9px; height: 9px; border-radius: 50%; background: #262626; display: grid; place-items: center; color: #eee; margin-right: 1px; }
.side { position: absolute; right: 0; top: 7px; }

.nodeed { background: #1d1d1d; }
.bar.dark { background: #1d1d1d; padding-right: 3px; }
.foot { padding-right: 2px; }
.bar .drop + .menus { margin-left: 4px; }
.tree { position: absolute; left: 339px; }
.tree input { width: 50px; height: 7px; background: #242424; margin-left: 2px; padding-left: 1px; }
.canvas { flex: 1; position: relative; overflow: hidden; background: radial-gradient(circle, #222 0 1px, #1d1d1d 1px) 0 0 / 9px 9px; }
.crumbs { position: absolute; left: 0; top: 6px; gap: 3px; }
.crumbs .xs:not(:first-child) { margin-left: 2px; }
.frame { position: absolute; left: 226px; top: 77px; width: 349px; height: 103px; background: #7d7d7d; border-radius: 1px; box-shadow: 0 0 1px 1px #111; }
.links path { fill: none; stroke-width: 1; }
.links .int { stroke: #4f8553; }
.links .val { stroke: #959595; }
.links .dk { stroke: #444; stroke-width: 2; }
.links .geo { stroke: #06a880; stroke-width: 1.4; }
.node { position: absolute; width: 55px; padding-bottom: 2px; background: #303030; border-radius: 2px; box-shadow: 0 0 2px 1px rgba(0, 0, 0, .5); }
.node h3 { height: 8px; margin-bottom: 2px; padding: 0 4px; display: flex; align-items: center; gap: 2px; color: #fff; border-radius: 2px 2px 0 0; white-space: nowrap; overflow: hidden; }
.red { background: #872f4f; }
.cyan { background: #246283; }
.teal { background: #1d725e; }
.olive { background: #354a1c; }
.row { height: 8px; padding: 0 4px; position: relative; white-space: nowrap; }
.trio { display: grid; margin: 0 4px; position: relative; border-radius: 2px; }
.trio .field { border-radius: 0; box-shadow: inset 0 -1px #484848; }
.g1 { margin-top: 1px; }
.g2 { margin-top: 2px; }
.g3 { margin-top: 3px; }
.g4 { margin-top: 4px; }
.out { justify-content: flex-end; }
.in::before, .out::after { content: ""; position: absolute; left: -2px; top: 2px; width: 4px; height: 4px; border-radius: 50%; background: var(--c); box-shadow: 0 0 0 1px rgba(0, 0, 0, .3); }
.out::after { left: auto; right: -2px; }
.trio.in::before { left: -6px; top: 6px; }
.dia::before { border-radius: 0; transform: rotate(45deg) scale(.75); }
.c-geo { --c: #00d6a3; }
.c-val { --c: #a1a1a1; }
.c-int { --c: #598c5c; }
.c-bool { --c: #cca6d6; }
.c-vec { --c: #6363c7; }
.c-mat { --c: #eb7582; }
.field { flex: 1; display: flex; align-items: center; width: 100%; height: 8px; padding: 0 5px; background: #545454; border-radius: 1px; }
.field input { flex: 1; width: 0; text-align: right; }
.field.mid-text { text-align: center; }
.tick { gap: 2px; }
.tick input { appearance: none; width: 5px; height: 5px; background: #545454; border-radius: 1px; }
.switch { flex: 1; display: flex; }
.switch button { flex: 1; height: 8px; background: #545454; border-radius: 1px; }
.switch .on { background: #4772b3; color: #fff; }
.muted { background: #252525; color: #868686; }
.muted .teal { background: #1a3730; color: #979797; }
.muted .field { background: #373737; }
.muted .pick { background: #222; }
.muted .slot .ic { color: #aaa; }
.inner { position: absolute; inset: 0; width: 100%; height: 100%; }
.inner path { fill: none; stroke: #1e4a3e; stroke-width: .6; }
.picked { box-shadow: 0 0 0 1px #a9a9a9; }
.grp input { flex: 1; width: 0; background: #242424; height: 7px; padding-left: 2px; }
.n-group { left: 294px; top: -4px; width: 72px; }
.n-rings { left: 114px; top: 70px; }
.n-radius { left: 115px; top: 124px; }
.n-gap { left: 238px; top: 91px; }
.n-circle { left: 307px; top: 90px; }
.n-fill { left: 374px; top: 90px; }
.n-scale { left: 440px; top: 90px; }
.n-mat { left: 508px; top: 88px; }
.n-inst { left: 683px; top: 60px; }
.n-real { left: 757px; top: 59px; }

.find { background: #1d1d1d; height: 7px; border-radius: 1px; padding: 0 1px; }
.find input { flex: 1; width: 0; }
.w64 { width: 63px; }
.w44 { width: 44px; }
.outliner .bar { gap: 3px; padding-right: 3px; }
.outliner .find { margin-left: 51px; }
.items { flex: 1; background: repeating-linear-gradient(#282828 0 8px, #2b2b2b 8px 16px); }
.outliner .items { padding-top: 1px; }
.items li { height: 8px; display: flex; align-items: center; gap: 2px; padding: 0 3px 0 10px; }
.items .root { padding-left: 8px; }
.items .on { background: #334d80; }
.items em { font-style: normal; color: #f0a04c; }
.items .chip { margin-left: 7px; background: #1f6b55; }
.items .mod { margin-left: 7px; }
.glow { background: #7d6a63; border-radius: 1px; }
.eyes { display: flex; gap: 1px; }

.properties { background: #303030; }
.pf { margin-left: 71px; }
.propbody { flex: 1; display: flex; min-height: 0; }
.ptabs { width: 11px; background: #1c1c1c; padding-top: 4px; display: flex; flex-direction: column; }
.ptabs button { height: 11px; display: grid; place-items: center; opacity: .9; }
.ptabs .sep { margin-top: 3px; }
.ptabs .on { background: #303030; }
.panel { flex: 1; padding: 3px 3px 0 4px; min-width: 0; }
.path { display: flex; align-items: center; gap: 2px; height: 9px; }
.slots { display: flex; gap: 4px; margin-top: 6px; }
.list { flex: 1; height: 30px; background: #242424; border-radius: 1px; padding: 1px; display: flex; flex-direction: column; justify-content: space-between; }
.slotrow { height: 8px; background: #45464f; border-radius: 1px; padding: 1px; display: flex; align-items: center; }
.listfoot { display: flex; align-items: center; padding: 0 2px; height: 6px; }
.listfoot i { width: 5px; height: 2px; background: #444; margin: 0 auto; }
.edit { display: grid; align-content: start; width: 8px; }
.edit .sq { height: 8px; }
.down { margin: 4px 0 0 2px; }
.newrow { display: flex; gap: 1px; margin-top: 3px; }
.new { flex: 1; height: 8px; display: flex; align-items: center; background: #545454; border-radius: 1px; padding: 0 3px; }
.new span { flex: 1; text-align: center; }
.newrow .drop:last-child { margin-left: 2px; }

.status { background: #1b1b1b; color: #979797; padding: 0 4px; }
.status span { display: flex; gap: 3px; align-items: center; }
.m2 { margin-left: 84px; }
.m3 { margin-left: 63px; }
```
FILE: hexgrid.js
```js
const RINGS = 10;
const ROW = 9.6;
const R = ROW / Math.sqrt(3);
const host = document.getElementById("hexes");

function hexPath(cx, cy) {
  const pts = [];
  for (let k = 0; k < 6; k++) {
    const a = (k * Math.PI) / 3;
    pts.push((cx + R * Math.cos(a)).toFixed(2) + " " + (cy + R * Math.sin(a)).toFixed(2));
  }
  return "M" + pts.join("L") + "Z";
}

let d = "";
for (let q = -RINGS; q <= RINGS; q++) {
  const count = 2 * RINGS + 1 - Math.abs(q);
  for (let i = 0; i < count; i++) {
    d += hexPath(q * 1.5 * R, (i - (count - 1) / 2) * ROW);
  }
}
const path = document.createElementNS("http://www.w3.org/2000/svg", "path");
path.setAttribute("d", d);
host.appendChild(path);
```
